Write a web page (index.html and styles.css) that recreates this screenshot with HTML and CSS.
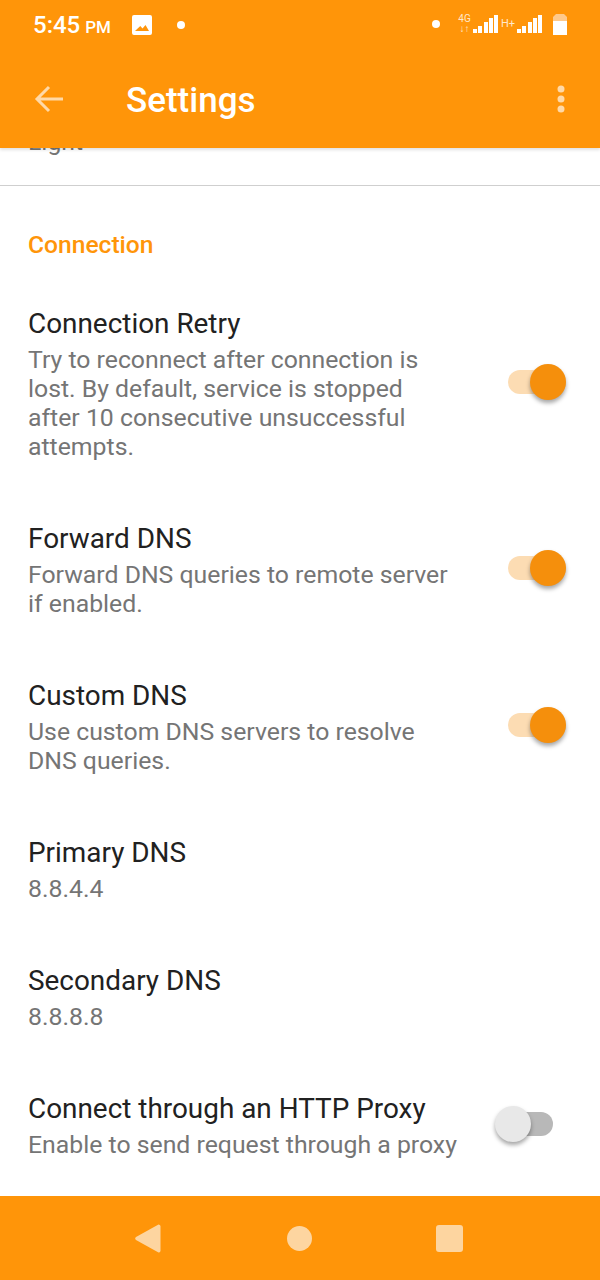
FILE: index.html
```html
<!DOCTYPE html>
<html lang="en">
<head>
<meta charset="utf-8">
<title>Settings</title>
<link rel="stylesheet" href="styles.css">
</head>
<body>
<div class="screen">
  <header class="appbar">
    <div class="status">
      <span class="clock">5:45<small>PM</small></span>
      <svg class="pic" width="20" height="20" viewBox="0 0 20 20"><path fill="#fff" fill-rule="evenodd" d="M2 0h16a2 2 0 0 1 2 2v16a2 2 0 0 1-2 2H2a2 2 0 0 1-2-2V2a2 2 0 0 1 2-2zM3 16h14l-3.500-6-3 3.500-2.200-2.500z"/></svg>
      <span class="dot dot-left"></span>
      <span class="status-right">
        <span class="dot"></span>
        <span class="net net-4g">4G<br>↓↑</span>
        <svg width="26" height="18" viewBox="0 0 26 18"><path fill="#fff" d="M0 14h4v4H0zM5 11h4v7H5zM11 7h4v11h-4zM16 3h4v15h-4zM21 0h4v18h-4z"/></svg>
        <span class="net net-h">H+</span>
        <svg width="26" height="18" viewBox="0 0 26 18"><path fill="#fff" d="M0 14h4v4H0zM5 11h4v7H5zM11 7h4v11h-4zM16 3h4v15h-4zM21 0h4v18h-4z"/></svg>
        <svg class="batt" width="14" height="21" viewBox="0 0 14 21"><path fill="#ffc98a" d="M3 0h8l3 3v5H0V3z"/><path fill="#fff" d="M0 7h14v14H0z"/></svg>
      </span>
    </div>
    <div class="toolbar">
      <svg class="back" width="30" height="28" viewBox="0 0 30 28"><path fill="none" stroke="#ffd9a8" stroke-width="3" d="M29 14H3M15 2 3 14l12 12"/></svg>
      <h1 class="title">Settings</h1>
      <svg class="more" width="8" height="28" viewBox="0 0 8 28"><circle cx="4" cy="4" r="3.500" fill="#ffd9a8"/><circle cx="4" cy="14" r="3.500" fill="#ffd9a8"/><circle cx="4" cy="24" r="3.500" fill="#ffd9a8"/></svg>
    </div>
  </header>

  <main class="content">
    <div class="clipped">Light</div>
    <h2 class="section">Connection</h2>

    <div class="row row-first">
      <div class="text">
        <div class="name">Connection Retry</div>
        <div class="desc">Try to reconnect after connection is lost. By default, service is stopped after 10 consecutive unsuccessful attempts.</div>
      </div>
      <span class="switch on"><i></i></span>
    </div>
    <div class="row">
      <div class="text">
        <div class="name">Forward DNS</div>
        <div class="desc">Forward DNS queries to remote server if enabled.</div>
      </div>
      <span class="switch on"><i></i></span>
    </div>
    <div class="row">
      <div class="text">
        <div class="name">Custom DNS</div>
        <div class="desc">Use custom DNS servers to resolve DNS queries.</div>
      </div>
      <span class="switch on"><i></i></span>
    </div>
    <div class="row">
      <div class="text">
        <div class="name">Primary DNS</div>
        <div class="desc">8.8.4.4</div>
      </div>
    </div>
    <div class="row">
      <div class="text">
        <div class="name">Secondary DNS</div>
        <div class="desc">8.8.8.8</div>
      </div>
    </div>
    <div class="row">
      <div class="text text-wide">
        <div class="name">Connect through an HTTP Proxy</div>
        <div class="desc">Enable to send request through a proxy</div>
      </div>
      <span class="switch off"><i></i></span>
    </div>
  </main>

  <nav class="navbar">
    <svg width="26" height="29" viewBox="0 0 26 29"><path fill="#fdd5a0" d="M23.500.500a2 2 0 0 1 2 1.500v25a2 2 0 0 1-2 1.500L1 16a2 2 0 0 1 0-3z"/></svg>
    <span class="nav-circle"></span>
    <span class="nav-square"></span>
  </nav>
</div>
</body>
</html>
```

FILE: styles.css
```css
* { box-sizing: border-box; }
html, body { margin: 0; padding: 0; }
body { font-family: Roboto, sans-serif; background: #fff; }
.screen { width: 600px; height: 1280px; display: flex; flex-direction: column; overflow: hidden; }

.appbar { height: 148px; flex: none; background: #ff9509; color: #fff; position: relative; z-index: 1; box-shadow: 0 2px 3px rgba(0,0,0,.12); }
.status { height: 50px; display: flex; align-items: center; padding: 0 33px; }
.clock { font-size: 24px; font-weight: 500; width: 99px; }
.clock small { font-size: 17px; margin-left: 5px; }
.dot { width: 8px; height: 8px; border-radius: 50%; background: #fff; display: block; }
.dot-left { margin-left: 25px; }
.status-right { margin-left: auto; margin-bottom: 2px; display: flex; align-items: center; gap: 2px; }
.status-right .dot { margin-right: 16px; }
.net { font-size: 11px; line-height: 10px; text-align: center; color: #ffe8cc; width: 13px; }
.net-4g { font-size: 10px; line-height: 10px; }
.net-h { width: 14px; }
.batt { margin-left: 8px; }
.toolbar { height: 98px; display: flex; align-items: center; padding: 0 35px 0 34px; }
.back { flex: none; }
.title { font-size: 35px; font-weight: 500; margin: 2px 0 0 62px; flex: 1; }
.more { flex: none; }

.content { flex: 1; min-height: 0; overflow: hidden; }
.clipped { height: 44px; margin-top: -6px; border-bottom: 1px solid #cfcfcf; padding-left: 28px; font-size: 24.800px; line-height: 0; color: #757575; }
.section { margin: 0; padding: 46px 28px 0; font-size: 24.600px; line-height: 26px; font-weight: 500; color: #ff9509; }

.row { display: flex; align-items: center; padding: 0 34px 0 28px; margin-top: 63px; }
.row-first { margin-top: 51px; }
.text { width: 430px; flex: none; }
.text-wide { width: 466px; }
.name { font-size: 27.900px; line-height: 30px; color: #212121; }
.desc { font-size: 24.800px; line-height: 29px; margin-top: 6px; color: #757575; }

.switch { position: relative; display: block; height: 24px; border-radius: 12px; margin-left: auto; margin-bottom: 6px; }
.switch i { position: absolute; top: -6px; width: 36px; height: 36px; border-radius: 50%; box-shadow: 0 3px 4px rgba(0,0,0,.35); }
.switch.on { width: 58px; background: #fcdcb3; margin-right: 0; }
.switch.on i { right: 0; background: #f58f0c; }
.switch.off { width: 49px; background: #b8b8b8; margin-right: 13px; }
.switch.off i { left: -9px; background: #e8e8e8; }

.navbar { height: 84px; flex: none; background: #ff9509; display: flex; align-items: center; padding-left: 135px; gap: 126px; }
.nav-circle { width: 25px; height: 25px; border-radius: 50%; background: #fdd5a0; }
.nav-square { width: 27px; height: 27px; border-radius: 3px; background: #fdd5a0; margin-left: -2px; }
```
